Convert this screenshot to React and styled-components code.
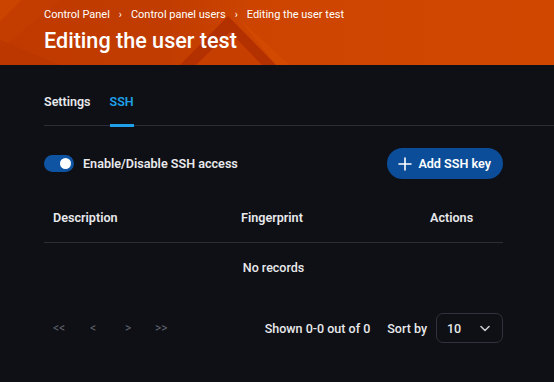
import React from "react";
import styled, { createGlobalStyle } from "styled-components";

const Global = createGlobalStyle`
  html, body { margin: 0; padding: 0; background: #0f1015; }
  body { font-family: Roboto, "Liberation Sans", Arial, sans-serif; color: #e8e9ec; }
  * { box-sizing: border-box; }
`;

const Page = styled.div`
  width: 554px;
  height: 382px;
  background: #0f1015;
  overflow: hidden;
`;

const Header = styled.header`
  position: relative;
  height: 65px;
  padding: 8px 0 0 44px;
  background: linear-gradient(90deg, #c03a00 0%, #c13c00 30%, #cc4400 45%, #d04800 100%);
  overflow: hidden;
`;

const HeaderArt = styled.svg`
  position: absolute;
  inset: 0;
  width: 554px;
  height: 65px;
`;

const HeaderContent = styled.div`
  position: relative;
  display: flex;
  flex-direction: column;
  gap: 5px;
`;

const Crumbs = styled.nav`
  display: flex;
  align-items: center;
  gap: 8px;
  font-size: 11px;
  line-height: 14px;
  color: #fff;
`;

const Sep = styled.span`
  font-size: 10px;
  padding: 0 1px;
`;

const Title = styled.h1`
  margin: 0;
  font-size: 21.6px;
  line-height: 27px;
  font-weight: 500;
  color: #fff;
`;

const Body = styled.main`
  padding: 27px 0 0 44px;
`;

const Tabs = styled.div`
  display: flex;
  gap: 19px;
  border-bottom: 1px solid #2a2e38;
`;

const Tab = styled.div`
  position: relative;
  font-size: 12.5px;
  font-weight: 600;
  line-height: 14px;
  padding: 3px 0 16px;
  color: ${(p) => (p.$active ? "#1ea1e8" : "#e8e9ec")};
  &::after {
    content: "";
    display: ${(p) => (p.$active ? "block" : "none")};
    position: absolute;
    left: 0;
    right: 0;
    bottom: -2px;
    height: 3px;
    background: #1ea1e8;
  }
`;

const Content = styled.div`
  width: 459px;
`;

const ToolRow = styled.div`
  display: flex;
  align-items: center;
  justify-content: space-between;
  margin-top: 22px;
`;

const ToggleLabel = styled.label`
  display: flex;
  align-items: center;
  gap: 9px;
  font-size: 12.6px;
  font-weight: 600;
  color: #e8e9ec;
`;

const Switch = styled.span`
  position: relative;
  width: 30px;
  height: 17px;
  border-radius: 9px;
  background: #0f53a3;
  &::after {
    content: "";
    position: absolute;
    right: 3px;
    top: 3px;
    width: 11px;
    height: 11px;
    border-radius: 50%;
    background: #fff;
  }
`;

const AddButton = styled.button`
  display: flex;
  align-items: center;
  gap: 6px;
  height: 31px;
  padding: 0 12px 0 11px;
  border: none;
  border-radius: 16px;
  background: #0b4d98;
  color: #fff;
  font-family: inherit;
  font-size: 12.6px;
  font-weight: 600;
`;

const Table = styled.div`
  margin-top: 14px;
`;

const HeadRow = styled.div`
  display: grid;
  grid-template-columns: 188px 189px 1fr;
  padding: 0 0 0 9px;
  height: 50px;
  align-items: center;
  border-bottom: 1px solid #2a2e38;
`;

const HeadCell = styled.div`
  font-size: 12.6px;
  font-weight: 600;
  color: #e8e9ec;
`;

const Empty = styled.div`
  text-align: center;
  font-size: 12.5px;
  font-weight: 500;
  color: #e8e9ec;
  padding: 17px 0 0;
  height: 48px;
`;

const Pager = styled.div`
  display: flex;
  align-items: center;
  margin-top: 22px;
`;

const Nav = styled.div`
  display: flex;
  align-items: center;
  padding-left: 9px;
  flex: 1;
`;

const NavBtn = styled.span`
  width: ${(p) => p.$w}px;
  font-size: 12px;
  color: #5f636e;
`;

const Shown = styled.span`
  font-size: 12.5px;
  font-weight: 500;
  margin-right: 17px;
`;

const SortLabel = styled.span`
  font-size: 12.5px;
  font-weight: 500;
  margin-right: 9px;
`;

const Select = styled.div`
  display: flex;
  align-items: center;
  justify-content: space-between;
  width: 67px;
  height: 30px;
  padding: 0 12px 0 10px;
  border: 1px solid #2f333e;
  border-radius: 7px;
  font-size: 12.5px;
  font-weight: 500;
`;

export default function App() {
  return (
    <Page>
      <Global />
      <Header>
        <HeaderArt viewBox="0 0 554 65" preserveAspectRatio="none">
          <polygon points="0,0 22,0 0,22" fill="#cc4500" />
          <polygon points="0,22 22,0 60,0 0,50" fill="#c43d00" opacity="0.6" />
          <polygon points="0,65 0,40 60,65" fill="#b83200" opacity="0.5" />
          <polygon points="228,16 180,65 276,65" fill="#b33000" />
          <polygon points="240,20 290,65 276,65" fill="#d24a02" />
          <polygon points="196,65 230,32 262,65" fill="#c63e00" />
        </HeaderArt>
        <HeaderContent>
          <Crumbs>
            <span>Control Panel</span>
            <Sep>›</Sep>
            <span>Control panel users</span>
            <Sep>›</Sep>
            <span>Editing the user test</span>
          </Crumbs>
          <Title>Editing the user test</Title>
        </HeaderContent>
      </Header>
      <Body>
        <Tabs>
          <Tab>Settings</Tab>
          <Tab $active>SSH</Tab>
        </Tabs>
        <Content>
          <ToolRow>
            <ToggleLabel>
              <Switch />
              Enable/Disable SSH access
            </ToggleLabel>
            <AddButton>
              <svg width="14" height="14" viewBox="0 0 14 14">
                <path d="M7 1v12M1 7h12" stroke="#fff" strokeWidth="1.6" strokeLinecap="round" />
              </svg>
              Add SSH key
            </AddButton>
          </ToolRow>
          <Table>
            <HeadRow>
              <HeadCell>Description</HeadCell>
              <HeadCell>Fingerprint</HeadCell>
              <HeadCell>Actions</HeadCell>
            </HeadRow>
            <Empty>No records</Empty>
          </Table>
          <Pager>
            <Nav>
              <NavBtn $w={37}>&lt;&lt;</NavBtn>
              <NavBtn $w={35}>&lt;</NavBtn>
              <NavBtn $w={30}>&gt;</NavBtn>
              <NavBtn $w={20}>&gt;&gt;</NavBtn>
            </Nav>
            <Shown>Shown 0-0 out of 0</Shown>
            <SortLabel>Sort by</SortLabel>
            <Select>
              <span>10</span>
              <svg width="10" height="7" viewBox="0 0 10 7">
                <path d="M1 1.5l4 4 4-4" stroke="#c8cad0" strokeWidth="1.6" fill="none" strokeLinecap="round" strokeLinejoin="round" />
              </svg>
            </Select>
          </Pager>
        </Content>
      </Body>
    </Page>
  );
}
